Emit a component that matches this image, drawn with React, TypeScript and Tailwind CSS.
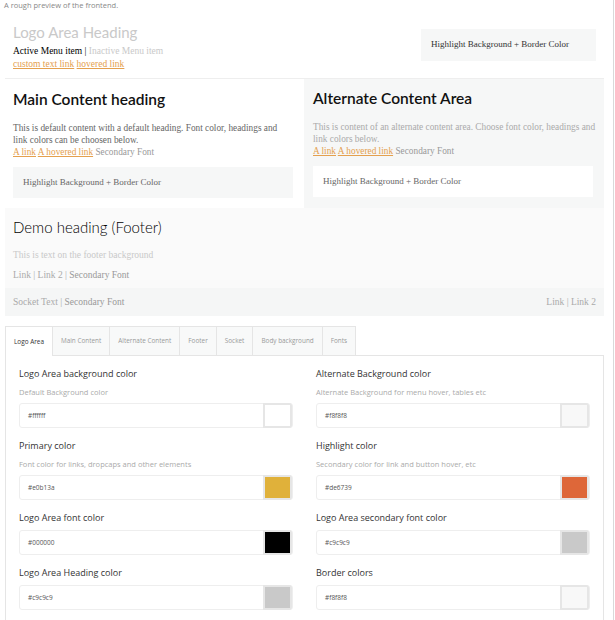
import React from 'react';

const serif = { fontFamily: '"Liberation Serif", "DejaVu Serif", serif' };
const lato = { fontFamily: 'Lato, "Liberation Sans", sans-serif' };
const ui = { fontFamily: '"Open Sans", "Noto Sans", sans-serif' };

const tabs = ['Logo Area', 'Main Content', 'Alternate Content', 'Footer', 'Socket', 'Body background', 'Fonts'];

interface FieldProps {
    label: string;
    hint?: string;
    value: string;
    swatch: string;
}

const ColorField: React.FC<FieldProps> = ({ label, hint, value, swatch }) => {
    return (
        <div className="flex flex-col">
            <div className="text-[9px] leading-[12px] text-[#333] mt-[12px]">{label}</div>
            {hint && <div className="text-[7.5px] leading-[10px] text-[#aaa] mt-[7px]">{hint}</div>}
            <div className="mt-[6px] h-[25px] flex items-center rounded-[3px] border border-[#eee] bg-white">
                <span className="flex-1 pl-[8px] text-[6.5px] text-[#555]">{value}</span>
                <div className="w-[29px] h-[25px] p-[2px] bg-[#e6e6e6] rounded-r-[3px]">
                    <div className="w-full h-full" style={{ backgroundColor: swatch }} />
                </div>
            </div>
        </div>
    );
};

const HighlightBox: React.FC<{ className: string }> = ({ className }) => (
    <div className={`h-[31px] flex items-center pl-[10px] text-[9px] text-[#666] ${className}`} style={serif}>
        Highlight Background + Border Color
    </div>
);

export default function App() {
    return (
        <div className="w-[614px] min-h-[620px] bg-white border-r border-[#d9d9d9]">
            <div className="h-[12px] pl-[4px] text-[7.5px] leading-[11px] text-[#888]" style={ui}>
                A rough preview of the frontend.
            </div>

            <div className="mx-[5px] w-[599px]">
                {/* logo area */}
                <div className="flex justify-between items-start h-[67px] border-b border-[#eee] bg-white">
                    <div className="pl-[8px] pt-[9px]">
                        <div className="text-[15px] leading-[22px] text-[#c9c9c9]" style={lato}>Logo Area Heading</div>
                        <div className="text-[9.5px] leading-[13px] mt-[2px]" style={serif}>
                            <span className="text-black">Active Menu item | </span>
                            <span className="text-[#c9c9c9]">Inactive Menu item</span>
                        </div>
                        <div className="text-[9.5px] leading-[13px]" style={serif}>
                            <span className="text-[#e4a04e] underline">custom text link</span>{' '}
                            <span className="text-[#e4a04e] underline">hovered link</span>
                        </div>
                    </div>
                    <div className="mt-[17px] mr-[8px] w-[175px] h-[32px] bg-[#f6f7f7] flex items-center pl-[10px] text-[9px] text-[#333]" style={serif}>
                        Highlight Background + Border Color
                    </div>
                </div>

                {/* content */}
                <div className="flex h-[129px]">
                    <div className="w-[299px] pl-[8px] pr-[11px] pt-[10px] bg-white">
                        <div className="text-[15.5px] leading-[20px] font-semibold text-[#111]" style={lato}>Main Content heading</div>
                        <div className="mt-[13px] text-[9.3px] leading-[12px] text-[#666]" style={serif}>
                            This is default content with a default heading. Font color, headings and link colors can be choosen below.
                            <br />
                            <span className="text-[#e4a04e] underline">A link</span>{' '}
                            <span className="text-[#e4a04e] underline">A hovered link</span>{' '}
                            <span className="text-[#999]">Secondary Font</span>
                        </div>
                        <HighlightBox className="mt-[9px] bg-[#f6f7f7]" />
                    </div>
                    <div className="flex-1 pl-[9px] pr-[7px] pt-[9px] bg-[#f6f7f7]">
                        <div className="text-[15.5px] leading-[20px] font-semibold text-[#111]" style={lato}>Alternate Content Area</div>
                        <div className="mt-[13px] text-[9.3px] leading-[12px] text-[#aaa]" style={serif}>
                            This is content of an alternate content area. Choose font color, headings and link colors below.
                            <br />
                            <span className="text-[#e4a04e] underline">A link</span>{' '}
                            <span className="text-[#e4a04e] underline">A hovered link</span>{' '}
                            <span className="text-[#999]">Secondary Font</span>
                        </div>
                        <HighlightBox className="mt-[9px] mr-[4px] bg-white" />
                    </div>
                </div>

                {/* footer */}
                <div className="h-[80px] bg-[#fafafa] pl-[8px] pt-[9px]">
                    <div className="text-[15px] leading-[20px] font-light text-black" style={lato}>Demo heading (Footer)</div>
                    <div className="mt-[12px] text-[9.5px] leading-[12px] text-[#c9c9c9]" style={serif}>This is text on the footer background</div>
                    <div className="mt-[8px] text-[9.5px] leading-[12px] text-[#aaa]" style={serif}>
                        Link | Link 2 | <span className="text-[#999]">Secondary Font</span>
                    </div>
                </div>

                {/* socket */}
                <div className="h-[28px] bg-[#f5f6f6] flex items-center justify-between px-[8px] text-[9.5px] text-[#aaa]" style={serif}>
                    <span>Socket Text | <span className="text-[#999]">Secondary Font</span></span>
                    <span>Link | Link 2</span>
                </div>

                {/* settings */}
                <div className="mt-[10px]" style={ui}>
                    <div className="flex h-[30px]">
                        {tabs.map((t, i) => (
                            <div
                                key={t}
                                className={`h-[30px] flex items-center px-[8px] text-[6.4px] border-t border-r border-[#e5e5e5] ${i === 0 ? 'bg-white text-[#333] border-l' : 'bg-[#f8f9f9] text-[#999] border-b'}`}
                            >
                                {t}
                            </div>
                        ))}
                        <div className="flex-1 border-b border-[#e5e5e5]" />
                    </div>
                    <div className="border-l border-r border-[#e5e5e5] px-[13px] pb-[10px] grid grid-cols-2 gap-x-[23px]">
                        <div className="flex flex-col">
                            <ColorField label="Logo Area background color" hint="Default Background color" value="#ffffff" swatch="#ffffff" />
                            <ColorField label="Primary color" hint="Font color for links, dropcaps and other elements" value="#e0b13a" swatch="#e0b13a" />
                            <ColorField label="Logo Area font color" value="#000000" swatch="#000000" />
                            <ColorField label="Logo Area Heading color" value="#c9c9c9" swatch="#c9c9c9" />
                        </div>
                        <div className="flex flex-col">
                            <ColorField label="Alternate Background color" hint="Alternate Background for menu hover, tables etc" value="#f8f8f8" swatch="#f8f8f8" />
                            <ColorField label="Highlight color" hint="Secondary color for link and button hover, etc" value="#de6739" swatch="#de6739" />
                            <ColorField label="Logo Area secondary font color" value="#c9c9c9" swatch="#c9c9c9" />
                            <ColorField label="Border colors" value="#f8f8f8" swatch="#f8f8f8" />
                        </div>
                    </div>
                </div>
            </div>
        </div>
    );
}
